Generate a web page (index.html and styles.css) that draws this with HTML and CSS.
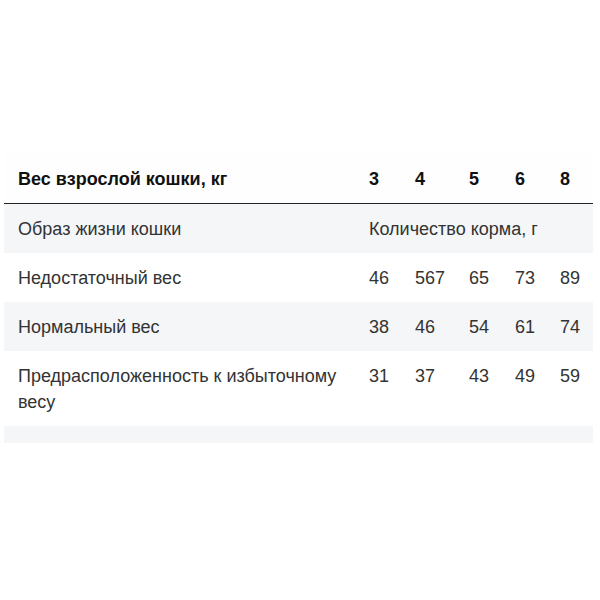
FILE: index.html
```html
<!DOCTYPE html>
<html lang="ru">
<head>
<meta charset="utf-8">
<link rel="stylesheet" href="styles.css">
</head>
<body>
<div class="page">
  <div class="wrap">
    <table class="feed">
      <colgroup>
        <col class="c-name">
        <col class="c-3">
        <col class="c-4">
        <col class="c-5">
        <col class="c-6">
        <col class="c-8">
      </colgroup>
      <thead>
        <tr>
          <th class="first">Вес взрослой кошки, кг</th>
          <th>3</th>
          <th>4</th>
          <th>5</th>
          <th>6</th>
          <th>8</th>
        </tr>
      </thead>
      <tbody>
        <tr class="odd">
          <td class="first">Образ жизни кошки</td>
          <td colspan="5">Количество корма, г</td>
        </tr>
        <tr>
          <td class="first">Недостаточный вес</td>
          <td>46</td><td>567</td><td>65</td><td>73</td><td>89</td>
        </tr>
        <tr class="odd">
          <td class="first">Нормальный вес</td>
          <td>38</td><td>46</td><td>54</td><td>61</td><td>74</td>
        </tr>
        <tr>
          <td class="first">Предрасположенность к избыточному весу</td>
          <td>31</td><td>37</td><td>43</td><td>49</td><td>59</td>
        </tr>
      </tbody>
    </table>
    <div class="foot"></div>
  </div>
</div>
</body>
</html>
```

FILE: styles.css
```css
html, body {
  margin: 0;
  padding: 0;
  background: #ffffff;
}

.page {
  padding-top: 152px;
  padding-left: 4px;
  width: 589px;
}

.wrap {
  background: #f8f9fa;
}

.feed {
  width: 589px;
  border-collapse: collapse;
  table-layout: fixed;
  font-family: "Liberation Sans", Arial, sans-serif;
  font-size: 18px;
  line-height: 26px;
  color: #333333;
}

.c-name { width: 353px; }
.c-3 { width: 46px; }
.c-4 { width: 54px; }
.c-5 { width: 46px; }
.c-6 { width: 45px; }
.c-8 { width: 45px; }

.feed th,
.feed td {
  text-align: left;
  vertical-align: top;
  padding: 12px 0 11px 12px;
}

.feed th.first,
.feed td.first {
  padding-left: 14px;
  padding-right: 12px;
}

.feed thead th {
  font-weight: bold;
  color: #111111;
  background: #fefefe;
  padding-top: 14px;
  padding-bottom: 11px;
  border-bottom: 1px solid #222222;
}

.feed tbody tr {
  background: #ffffff;
}

.feed tbody tr.odd {
  background: #f5f6f8;
}

.foot {
  height: 17px;
  background: #f5f6f8;
}
```
